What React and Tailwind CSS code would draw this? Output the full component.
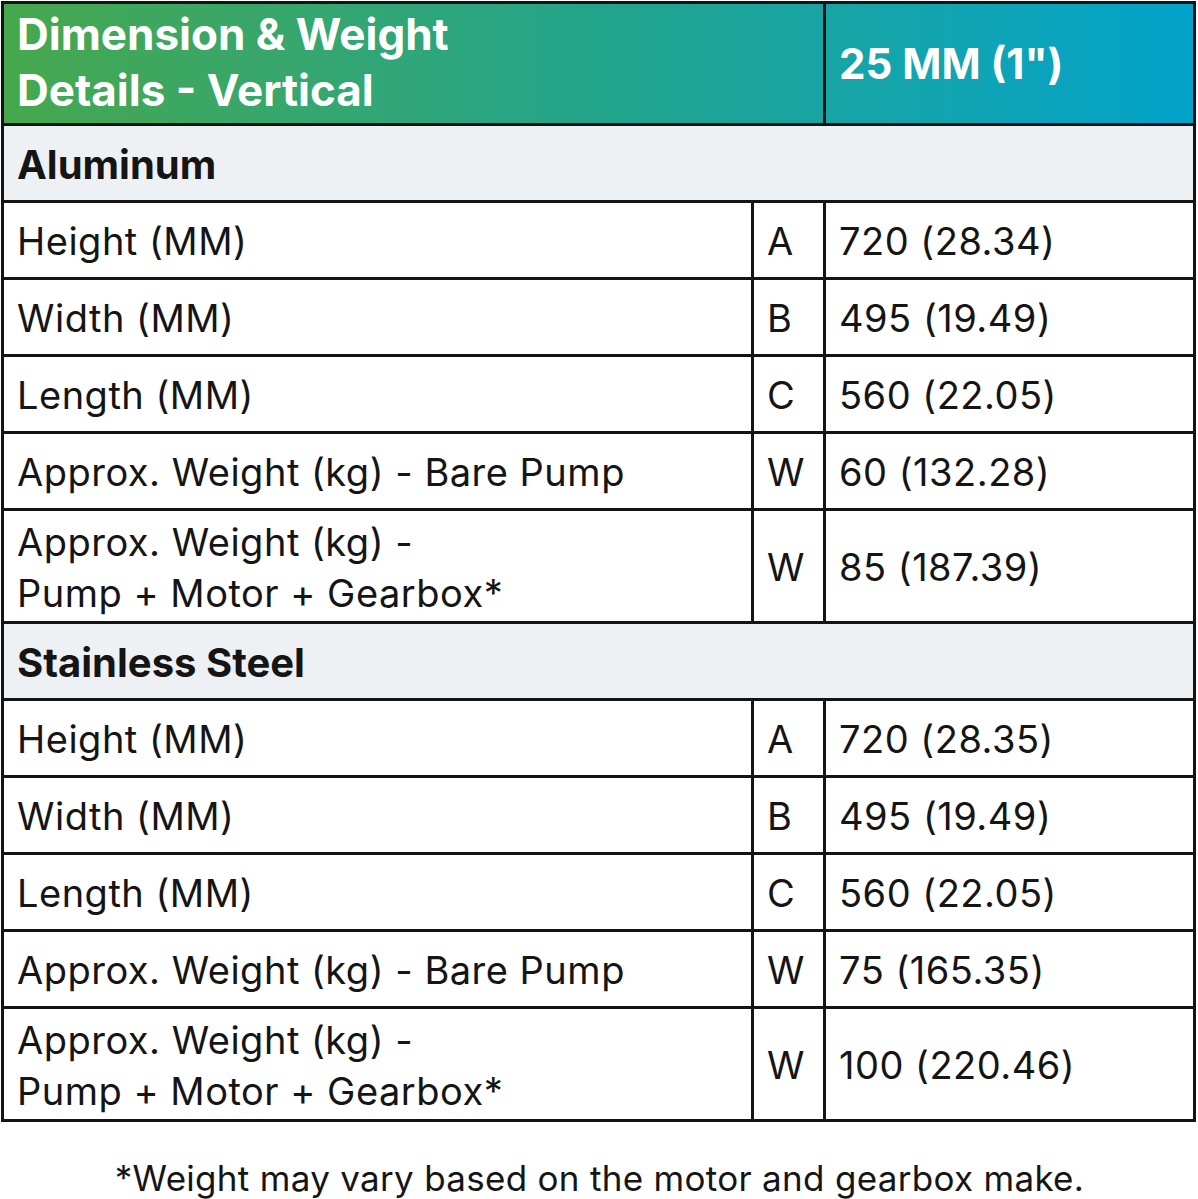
import React from 'react';

const sections = [
  {
    name: 'Aluminum',
    rows: [
      { label: 'Height (MM)', key: 'A', value: '720 (28.34)' },
      { label: 'Width (MM)', key: 'B', value: '495 (19.49)' },
      { label: 'Length (MM)', key: 'C', value: '560 (22.05)' },
      { label: 'Approx. Weight (kg) - Bare Pump', key: 'W', value: '60 (132.28)' },
      { label: ['Approx. Weight (kg) -', 'Pump + Motor + Gearbox*'], key: 'W', value: '85 (187.39)' },
    ],
  },
  {
    name: 'Stainless Steel',
    rows: [
      { label: 'Height (MM)', key: 'A', value: '720 (28.35)' },
      { label: 'Width (MM)', key: 'B', value: '495 (19.49)' },
      { label: 'Length (MM)', key: 'C', value: '560 (22.05)' },
      { label: 'Approx. Weight (kg) - Bare Pump', key: 'W', value: '75 (165.35)' },
      { label: ['Approx. Weight (kg) -', 'Pump + Motor + Gearbox*'], key: 'W', value: '100 (220.46)' },
    ],
  },
];

const cell = 'border-[3px] border-[#141414] px-[13px] align-middle';

const App = () => {
  return (
    <div className="w-[1198px] bg-white pt-[1px] pl-[1px] font-['Inter',sans-serif] text-[#151515]">
      <table className="w-[1195px] border-collapse table-fixed">
        <colgroup>
          <col className="w-[750px]" />
          <col className="w-[72px]" />
          <col />
        </colgroup>
        <thead>
          <tr className="h-[122px] bg-gradient-to-r from-[#45a84c] via-[#22a48b] to-[#03a3cb] text-white font-bold">
            <th colSpan={2} className={`${cell} text-left text-[44px] leading-[56px] pb-[3px]`}>
              Dimension &amp; Weight
              <br />
              Details - Vertical
            </th>
            <th className={`${cell} text-left text-[42px]`}>25 MM (1")</th>
          </tr>
        </thead>
        <tbody>
          {sections.map((section) => (
            <React.Fragment key={section.name}>
              <tr className="h-[77px] bg-[#eef1f4]">
                <td colSpan={3} className={`${cell} font-bold text-[40px] pt-[3px]`}>{section.name}</td>
              </tr>
              {section.rows.map((row, i) => (
                <tr key={i} className={Array.isArray(row.label) ? 'h-[113px]' : 'h-[77px]'}>
                  <td className={`${cell} text-[38px] tracking-[0.5px] leading-[51px] pt-[3px]`}>
                    {Array.isArray(row.label) ? (
                      <>
                        {row.label[0]}
                        <br />
                        {row.label[1]}
                      </>
                    ) : (
                      row.label
                    )}
                  </td>
                  <td className={`${cell} text-[38px] px-[12px] pt-[3px]`}>{row.key}</td>
                  <td className={`${cell} text-[38px] tracking-[0.5px] pt-[3px]`}>{row.value}</td>
                </tr>
              ))}
            </React.Fragment>
          ))}
        </tbody>
      </table>
      <p className="mt-[30px] text-center text-[35px] tracking-[0.3px] text-[#151515] pb-[8px]">
        *Weight may vary based on the motor and gearbox make.
      </p>
    </div>
  );
};

export default App;
